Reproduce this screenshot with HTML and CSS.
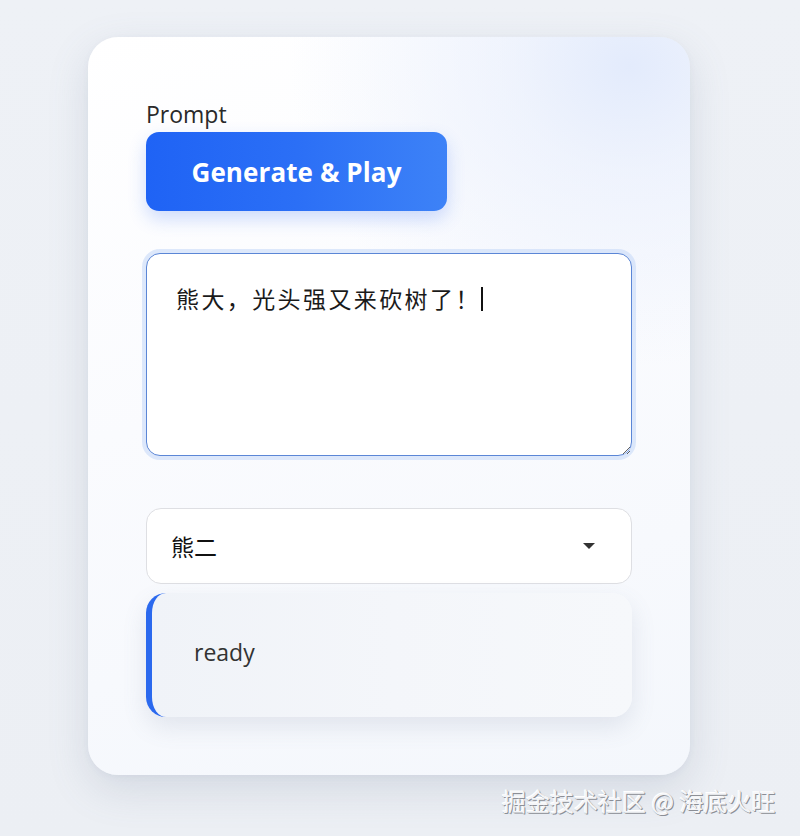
FILE: index.html
```html
<!DOCTYPE html>
<html lang="zh-CN">
<head>
<meta charset="utf-8">
<title>Prompt</title>
<link rel="stylesheet" href="styles.css">
</head>
<body>
<main class="page">
  <section class="card">
    <label class="label" for="prompt">Prompt</label>
    <button class="btn" type="button">Generate &amp; Play</button>
    <div class="textarea-wrap">
      <textarea id="prompt" class="textarea">熊大，光头强又来砍树了！</textarea>
      <span class="caret"></span>
    </div>
    <div class="select">
      <span class="select-value">熊二</span>
      <svg class="select-arrow" width="12" height="6" viewBox="0 0 12 6"><path d="M0 0H12L6 6Z" fill="#333"/></svg>
    </div>
    <div class="status">ready</div>
  </section>
  <div class="watermark">掘金技术社区 @ 海底火旺</div>
</main>
</body>
</html>
```
FILE: styles.css
```css
html, body {
  margin: 0;
  padding: 0;
}
body {
  background: #edf0f5;
  font-family: "Open Sans", "Noto Sans", "Noto Sans CJK SC", sans-serif;
  width: 800px;
  height: 836px;
  overflow: hidden;
}
.page {
  position: relative;
  width: 800px;
  height: 836px;
  padding: 37px 0 0 88px;
  box-sizing: border-box;
  background: linear-gradient(180deg, #eef1f6 0%, #eceff4 100%);
}
.card {
  width: 602px;
  height: 738px;
  box-sizing: border-box;
  padding: 64px 58px 58px 58px;
  border-radius: 30px;
  background:
    radial-gradient(ellipse 340px 300px at 90% 4%, #e3ebfc 0%, rgba(230,237,252,0.6) 35%, rgba(255,255,255,0) 100%),
    linear-gradient(165deg, #ffffff 0%, #fafbfe 45%, #f4f7fc 100%);
  box-shadow: 0 14px 40px rgba(100, 115, 145, 0.18), 0 2px 6px rgba(100,115,145,0.06);
  display: flex;
  flex-direction: column;
}
.label {
  font-size: 23px;
  line-height: 30px;
  color: #2a2a2a;
  height: 30px;
  margin-top: -2px;
}
.btn {
  margin-top: 3px;
  width: 301px;
  height: 79px;
  border: none;
  border-radius: 13px;
  background: linear-gradient(90deg, #1f63f5 0%, #2b6ff6 50%, #3d82f7 100%);
  color: #fff;
  font-family: "Open Sans", "Noto Sans", sans-serif;
  font-weight: 700;
  font-size: 26px;
  letter-spacing: 0.1px;
  box-shadow: 0 8px 18px rgba(40, 100, 240, 0.22);
  padding: 0;
}
.textarea-wrap {
  position: relative;
  margin-top: 42px;
  height: 203px;
}
.textarea {
  display: block;
  width: 100%;
  height: 203px;
  box-sizing: border-box;
  border: 1px solid #5b86d6;
  border-radius: 14px;
  box-shadow: 0 0 0 4px rgba(200, 218, 248, 0.6);
  padding: 28px 29px;
  font-family: "Noto Sans CJK SC", sans-serif;
  font-size: 23px;
  line-height: 32px;
  color: #1a1a1a;
  background: #fff;
  outline: none;
  resize: vertical;
  letter-spacing: 2.4px;
}
.caret {
  position: absolute;
  left: 335px;
  top: 34px;
  width: 2px;
  height: 24px;
  background: #111;
}
.select {
  margin-top: 52px;
  height: 76px;
  box-sizing: border-box;
  border: 1px solid #dedfe3;
  border-radius: 15px;
  background: #fff;
  display: flex;
  align-items: center;
  justify-content: space-between;
  padding: 0 36px 0 24px;
}
.select-value {
  font-family: "Noto Sans CJK SC", sans-serif;
  font-size: 23px;
  color: #111;
}
.status {
  margin-top: 9px;
  height: 124px;
  box-sizing: border-box;
  border-left: 6px solid #2b69ee;
  border-radius: 20px;
  background: linear-gradient(90deg, #f0f3f8 0%, #f4f6fa 50%, #f6f8fb 100%);
  box-shadow: 0 10px 24px rgba(100, 115, 145, 0.14);
  display: flex;
  align-items: center;
  padding: 0 0 6px 42px;
  font-size: 23px;
  color: #333;
}
.watermark {
  position: absolute;
  left: 502px;
  top: 783px;
  font-family: "Noto Sans CJK SC", sans-serif;
  font-size: 24px;
  letter-spacing: 0;
  color: #f4f5f8;
  text-shadow: 1px 1px 0 #8c8f96, -1px -1px 0 #ffffff, 0 0 1px #777;
}
```
